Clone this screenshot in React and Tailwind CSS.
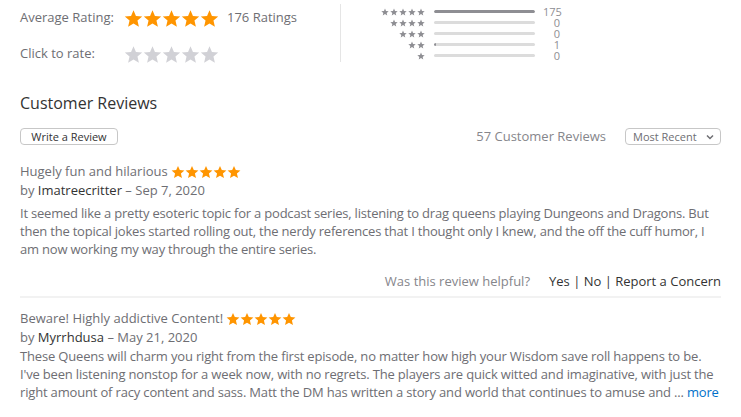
import React from 'react';

const Star = ({ size, color }) => (
  <svg width={size} height={size} viewBox="0 0 24 24" className="shrink-0">
    <path
      fill={color}
      d="M12 1.5l3.09 7.26 7.91.7-6 5.2 1.8 7.74L12 18.3l-6.8 4.1 1.8-7.74-6-5.2 7.91-.7z"
    />
  </svg>
);

const Stars = ({ count, size, color, step }) => (
  <div className="flex items-center" style={{ gap: step - size }}>
    {Array.from({ length: count }).map((_, i) => (
      <Star key={i} size={size} color={color} />
    ))}
  </div>
);

const histogram = [
  { stars: 5, count: 175 },
  { stars: 4, count: 0 },
  { stars: 3, count: 0 },
  { stars: 2, count: 1 },
  { stars: 1, count: 0 },
];

const reviews = [
  {
    title: 'Hugely fun and hilarious',
    author: 'Imatreecritter',
    date: 'Sep 7, 2020',
    body: 'It seemed like a pretty esoteric topic for a podcast series, listening to drag queens playing Dungeons and Dragons. But then the topical jokes started rolling out, the nerdy references that I thought only I knew, and the off the cuff humor, I am now working my way through the entire series.',
    bodyClass: 'mt-[5px] tracking-[-0.21px]',
  },
  {
    title: 'Beware! Highly addictive Content!',
    author: 'Myrrhdusa',
    date: 'May 21, 2020',
    body: "These Queens will charm you right from the first episode, no matter how high your Wisdom save roll happens to be. I've been listening nonstop for a week now, with no regrets. The players are quick witted and imaginative, with just the right amount of racy content and sass. Matt the DM has written a story and world that continues to amuse and",
    bodyClass: 'mt-px tracking-[-0.17px]',
    more: true,
  },
];

const Review = ({ review, last }) => (
  <div className={last ? '' : 'border-b-2 border-[#f2f2f2] pb-[5px]'}>
    <div className="flex items-center h-[18px] gap-[3px] text-[13px] text-[#6e6e73]">
      <span>{review.title}</span>
      <Stars count={5} size={14} color="#ff9500" step={13.5} />
    </div>
    <div className="h-[18px] leading-[18px] text-[13px] text-[#6e6e73]">
      by <span className="text-[#333]">{review.author}</span> – {review.date}
    </div>
    <p className={'text-[13px] leading-[18px] text-[#6e6e73] ' + review.bodyClass}>
      {review.body}
      {review.more && (
        <>
          {' ... '}
          <span className="text-[#0070c9]">more</span>
        </>
      )}
    </p>
    {!last && (
      <div className="mt-[15px] flex justify-end items-center h-[18px] text-[13px]">
        <span className="text-[#86868b] mr-[19px]">Was this review helpful?</span>
        <span className="text-[#333]">Yes | No | Report a Concern</span>
      </div>
    )}
  </div>
);

export default function App() {
  return (
    <div
      className="w-[741px] h-[417px] overflow-hidden bg-white px-5"
      style={{ fontFamily: '"Open Sans", "Noto Sans", sans-serif' }}
    >
      <div className="flex">
        <div className="w-[320px] pt-[5px] flex flex-col gap-[10px] text-[13px] text-[#6e6e73]">
          <div className="flex items-center h-[26px]">
            <span className="w-[104px]">Average Rating:</span>
            <Stars count={5} size={19} color="#ff9500" step={18.5} />
            <span className="ml-[8px]">176 Ratings</span>
          </div>
          <div className="flex items-center h-[26px]">
            <span className="w-[104px]">Click to rate:</span>
            <Stars count={5} size={19} color="#d1d1d6" step={18.5} />
          </div>
        </div>
        <div className="mt-[4px] h-[58px] border-l border-[#e5e5e5] pt-[2px]">
          <div className="flex flex-col">
            {histogram.map((row) => (
              <div key={row.stars} className="flex items-center h-[11px]">
                <div className="w-[84px] flex justify-end">
                  <Stars count={row.stars} size={8} color="#8e8e93" step={9} />
                </div>
                <div className="ml-[9px] w-[101px] h-[3px] rounded-full bg-[#dcdcdc] overflow-hidden">
                  <div
                    className="h-full bg-[#8e8e93] rounded-full"
                    style={{ width: `${(row.count / 175) * 100}%`, minWidth: row.count ? 2 : 0 }}
                  />
                </div>
                <div className="ml-[8px] w-[17px] h-[11px] text-right text-[11px] leading-[11px] text-[#8e8e93]">
                  {row.count}
                </div>
              </div>
            ))}
          </div>
        </div>
      </div>

      <h2 className="mt-[25px] text-[16px] leading-[22px] text-[#333]">Customer Reviews</h2>

      <div className="mt-[13px] flex items-center">
        <button className="w-[98px] h-[17px] border border-[#c7c7c7] rounded-[4px] text-[11px] leading-[15px] text-[#333]">
          Write a Review
        </button>
        <span className="ml-auto text-[13px] text-[#86868b]">57 Customer Reviews</span>
        <div className="ml-[19px] w-[96px] h-[17px] border border-[#c7c7c7] rounded-[4px] flex items-center pl-[7px] pr-[6px] text-[11px] text-[#6e6e73]">
          <span>Most Recent</span>
          <svg width="8" height="6" viewBox="0 0 8 6" className="ml-auto">
            <path d="M1 1.5l3 3 3-3" fill="none" stroke="#6e6e73" strokeWidth="1.5" />
          </svg>
        </div>
      </div>

      <div className="mt-[16px] flex flex-col gap-[12px]">
        {reviews.map((r, i) => (
          <Review key={i} review={r} last={i === reviews.length - 1} />
        ))}
      </div>
    </div>
  );
}
